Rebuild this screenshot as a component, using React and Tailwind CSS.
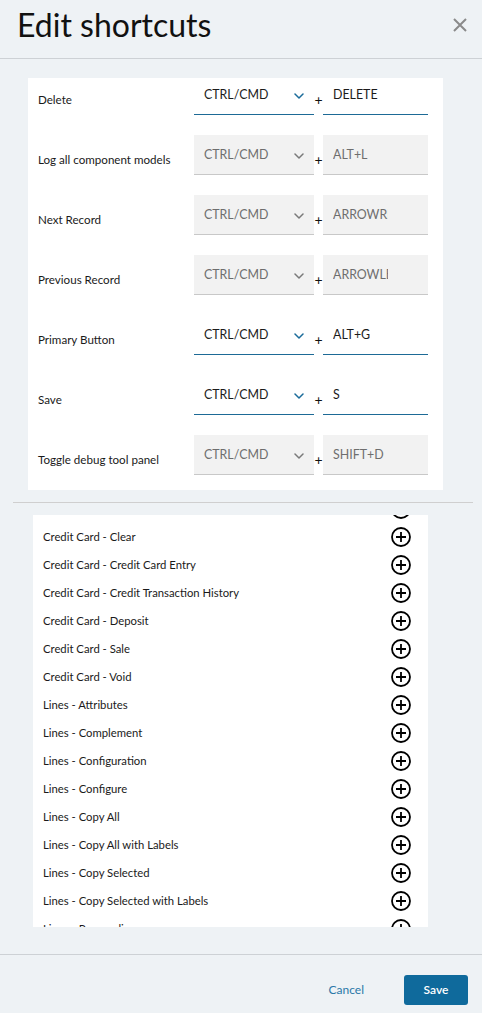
const shortcuts = [
  { label: "Delete", mod: "CTRL/CMD", key: "DELETE", active: true },
  { label: "Log all component models", mod: "CTRL/CMD", key: "ALT+L", active: false },
  { label: "Next Record", mod: "CTRL/CMD", key: "ARROWRIGHT", active: false },
  { label: "Previous Record", mod: "CTRL/CMD", key: "ARROWLEFT", active: false },
  { label: "Primary Button", mod: "CTRL/CMD", key: "ALT+G", active: true },
  { label: "Save", mod: "CTRL/CMD", key: "S", active: true },
  { label: "Toggle debug tool panel", mod: "CTRL/CMD", key: "SHIFT+D", active: false },
];

const actions = [
  "Credit Card - Authorize",
  "Credit Card - Clear",
  "Credit Card - Credit Card Entry",
  "Credit Card - Credit Transaction History",
  "Credit Card - Deposit",
  "Credit Card - Sale",
  "Credit Card - Void",
  "Lines - Attributes",
  "Lines - Complement",
  "Lines - Configuration",
  "Lines - Configure",
  "Lines - Copy All",
  "Lines - Copy All with Labels",
  "Lines - Copy Selected",
  "Lines - Copy Selected with Labels",
  "Lines - Personalize",
];

function Chevron({ active }) {
  return (
    <svg width="10" height="6" viewBox="0 0 10 6" fill="none" className="mt-[2px]">
      <path
        d="M1 1l4 4 4-4"
        stroke={active ? "#1a6b9a" : "#7a7a7a"}
        strokeWidth="1.5"
        strokeLinecap="round"
        strokeLinejoin="round"
      />
    </svg>
  );
}

function PlusCircle() {
  return (
    <svg width="22" height="22" viewBox="0 0 22 22" fill="none">
      <circle cx="11" cy="11" r="9" stroke="#000" strokeWidth="1.8" />
      <path d="M11 6v10M6 11h10" stroke="#000" strokeWidth="1.8" />
    </svg>
  );
}

function ShortcutRow({ item }) {
  const field = item.active
    ? "bg-white border-b border-[#1d6a96] text-[#1b1b1b]"
    : "bg-[#f2f2f2] border-b border-[#c8c8c8] text-[#6e6e6e]";
  return (
    <div className="flex items-start h-[40px]">
      <div className="w-[166px] pl-[10px] pt-[15px] text-[11.6px] leading-[20px] text-[#1a1a1a]">
        {item.label}
      </div>
      <div className={`w-[120px] h-[40px] flex items-center justify-between pl-[10px] pr-[10px] ${field}`}>
        <span className="pt-[2px] text-[12.4px]">{item.mod}</span>
        <Chevron active={item.active} />
      </div>
      <div className="w-[9px] pt-[15px] text-center text-[14px] leading-[20px] text-[#111]">+</div>
      <div className={`w-[105px] h-[40px] flex items-center pl-[10px] ${field}`}>
        <span className="w-[55px] pt-[2px] overflow-hidden whitespace-nowrap text-[12.4px]">
          {item.key}
        </span>
      </div>
    </div>
  );
}

export default function App() {
  return (
    <div
      className="w-full h-[1013px] flex flex-col bg-[#eef2f5] overflow-hidden"
      style={{ fontFamily: "Lato, 'Open Sans', sans-serif" }}
    >
      <div className="h-[59px] shrink-0 border-b border-[#cdd1d5] flex items-center justify-between pl-[17px] pr-[14px] pb-[8px]">
        <h1 className="text-[32px] font-normal text-[#111]">Edit shortcuts</h1>
        <button className="text-[#8a8a8a]">
          <svg width="16" height="16" viewBox="0 0 16 16" fill="none">
            <path d="M2 2l12 12M14 2L2 14" stroke="currentColor" strokeWidth="2" />
          </svg>
        </button>
      </div>

      <div className="ml-[28px] mt-[19px] w-[415px] h-[412px] bg-white overflow-hidden">
        <div className="-mt-[3px] flex flex-col gap-[20px]">
          {shortcuts.map((s) => (
            <ShortcutRow key={s.label} item={s} />
          ))}
        </div>
      </div>

      <div className="mt-[12px] ml-[13px] mr-[9px] border-t border-[#cfcfcf]" />

      <div className="ml-[33px] mt-[12px] w-[395px] h-[412px] bg-white overflow-hidden">
        <div className="-mt-[20px]">
          {actions.map((a) => (
            <div key={a} className="h-[28px] flex items-center justify-between pl-[10px] pr-[16px]">
              <span className="text-[11.3px] text-[#1a1a1a]">{a}</span>
              <PlusCircle />
            </div>
          ))}
        </div>
      </div>

      <div className="mt-auto h-[59px] border-t border-[#cdd1d5] flex items-start justify-end pt-[20px] pr-[14px] gap-[40px]">
        <button className="h-[30px] text-[12px] text-[#2a78a8]">Cancel</button>
        <button className="h-[30px] w-[64px] rounded-[3px] bg-[#0f6a9c] text-white text-[12px] font-semibold">
          Save
        </button>
      </div>
    </div>
  );
}
